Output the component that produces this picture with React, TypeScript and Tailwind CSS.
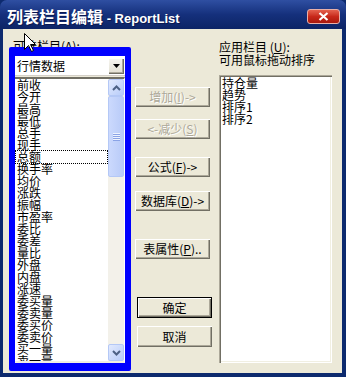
import React from "react";

const AVAILABLE = [
  "前收", "今开", "最高", "最低", "总手", "现手", "总额", "换手率", "均价", "涨跌", "振幅", "市盈率",
  "委比", "委差", "量比", "外盘", "内盘", "涨速", "委买量", "委卖量", "委买价", "委卖价", "买一量", "卖一量",
];
const APPLIED = ["持仓量", "趋势", "排序1", "排序2"];

const BEVEL = "shadow-[inset_1px_1px_0_#ffffff,inset_-1px_-1px_0_#716f64,inset_-2px_-2px_0_#aca899]";

function Btn({ children, disabled, isDefault, className = "" }: { children: React.ReactNode; disabled?: boolean; isDefault?: boolean; className?: string }) {
  return (
    <div
      className={`flex items-center justify-center w-[75px] bg-[#ece9d8] text-[12px] leading-[12px] ${BEVEL} ${
        isDefault ? "border border-black h-[21px]" : "h-[20px]"
      } ${disabled ? "text-[#aca899] [text-shadow:1px_1px_0_#ffffff]" : "text-black"} ${className}`}
    >
      {children}
    </div>
  );
}

function Chevron({ up }: { up?: boolean }) {
  return (
    <svg width="9" height="6" viewBox="0 0 9 6">
      <path d={up ? "M1 5 L4.5 1.5 L8 5" : "M1 1 L4.5 4.5 L8 1"} fill="none" stroke="#4d6185" strokeWidth="2" />
    </svg>
  );
}

function ScrollBtn({ up }: { up?: boolean }) {
  return (
    <div className="h-[17px] flex items-center justify-center rounded-[2px] border border-[#b4c8f6] bg-gradient-to-br from-[#e2eafe] to-[#b8ccf9]">
      <Chevron up={up} />
    </div>
  );
}

export default function App() {
  return (
    <div className="relative w-[346px] h-[377px] bg-[#0d2a6e] font-['Noto_Sans_CJK_SC','Noto_Sans',sans-serif] overflow-hidden">
      {/* title bar */}
      <div className="h-[29px] flex items-start justify-between rounded-t-[7px] bg-gradient-to-b from-[#2f4fa2] via-[#15307c] to-[#0c2466]">
        <div className="mt-[8px] ml-[7px] flex items-baseline text-white font-bold [text-shadow:1px_1px_0_#0a1850] whitespace-nowrap">
          <span className="text-[16px] leading-[16px]">列表栏目编辑</span>
          <span className="text-[13px] leading-[16px] font-['Liberation_Sans',sans-serif]">&nbsp;- ReportList</span>
        </div>
        <div className="mt-[9px] mr-[6px] w-[33px] h-[15px] rounded-[3px] border border-[#e8b0a8] bg-gradient-to-b from-[#e4604e] via-[#c8281a] to-[#a8180c] flex items-center justify-center">
          <svg width="11" height="9" viewBox="0 0 11 9">
            <path d="M1.5 1 L9.5 8 M9.5 1 L1.5 8" stroke="#ffffff" strokeWidth="2.2" />
          </svg>
        </div>
      </div>

      {/* client area */}
      <div className="ml-[3px] mr-[4px] h-[344px] bg-[#ece9d8] flex text-[12px] text-black">
        {/* left column */}
        <div className="ml-[12px] w-[110px] pt-[11px] flex flex-col">
          <div className="-ml-[2px] h-[12px] leading-[12px] whitespace-nowrap">
            可选栏目(<u>A</u>):
          </div>
          <div className="mt-[4px] h-[20px] bg-white flex items-center justify-between border-b border-[#d4d0c8]">
            <span className="ml-[2px] text-[12px] leading-[12px]">行情数据</span>
            <div className={`w-[16px] h-[16px] mr-[1px] flex items-center justify-center bg-gradient-to-b from-[#f7f6f1] to-[#e3e0d2] ${BEVEL}`}>
              <svg width="7" height="4" viewBox="0 0 7 4">
                <path d="M0 0 H7 L3.5 4 Z" fill="#000000" />
              </svg>
            </div>
          </div>
          <div className="mt-[1px] h-[286px] flex bg-white border-t-2 border-t-[#716f64] border-b-2 border-b-[#f1efe2] border-r border-r-white">
            <div className="flex-1 pl-[1px] overflow-hidden">
              {AVAILABLE.map((item, i) => (
                <div
                  key={item}
                  className={`h-[12px] leading-[12px] pl-[1px] whitespace-nowrap ${
                    i === 6 ? "border border-dotted border-black -my-[1px] h-[14px] -ml-[1px]" : ""
                  }`}
                >
                  {item}
                </div>
              ))}
            </div>
            <div className="w-[16px] flex flex-col bg-[#f3f1ea]">
              <ScrollBtn up />
              <div className="h-[81px] flex items-center justify-center rounded-[2px] border border-[#b4c8f6] bg-gradient-to-r from-[#cbd9fd] to-[#b9cbf8]">
                <div className="flex flex-col gap-[1px]">
                  <div className="w-[7px] h-[1px] bg-[#eef3fe] shadow-[0_1px_0_#8aa3e6]" />
                  <div className="w-[7px] h-[1px] bg-[#eef3fe] shadow-[0_1px_0_#8aa3e6]" />
                  <div className="w-[7px] h-[1px] bg-[#eef3fe] shadow-[0_1px_0_#8aa3e6]" />
                  <div className="w-[7px] h-[1px] bg-[#eef3fe] shadow-[0_1px_0_#8aa3e6]" />
                </div>
              </div>
              <div className="flex-1" />
              <ScrollBtn />
            </div>
          </div>
        </div>

        {/* middle buttons */}
        <div className="ml-[10px] w-[77px] pt-[58px] flex flex-col">
          <Btn disabled>增加(<u>I</u>)-&gt;</Btn>
          <Btn disabled className="mt-[12px]">&lt;-减少(<u>S</u>)</Btn>
          <Btn className="mt-[18px]">公式(<u>F</u>)-&gt;</Btn>
          <Btn className="mt-[14px]">数据库(<u>D</u>)-&gt;</Btn>
          <Btn className="mt-[28px]">表属性(<u>P</u>)..</Btn>
          <Btn isDefault className="mt-[38px] ml-[2px]">确定</Btn>
          <Btn className="mt-[8px] ml-[2px] h-[21px]">取消</Btn>
        </div>

        {/* right column */}
        <div className="ml-[7px] w-[113px] pt-[11px] flex flex-col">
          <div className="leading-[13px] whitespace-nowrap">应用栏目 (<u>U</u>):</div>
          <div className="leading-[13px] whitespace-nowrap">可用鼠标拖动排序</div>
          <div className="mt-[9px] h-[288px] bg-white p-[2px] pl-[3px] shadow-[inset_1px_1px_0_#aca899,inset_2px_2px_0_#716f64,inset_-1px_-1px_0_#ffffff,inset_-2px_-2px_0_#f1efe2]">
            {APPLIED.map((item) => (
              <div key={item} className="h-[12px] leading-[12px] whitespace-nowrap">
                {item}
              </div>
            ))}
          </div>
        </div>
      </div>

      {/* blue annotation frame */}
      <div className="absolute left-[9px] top-[47px] w-[122px] h-[324px] border-[#0000ff] border-x-[6px] border-t-[9px] border-b-[8px] rounded-[2px] pointer-events-none" />

      {/* mouse pointer */}
      <svg className="absolute left-[24px] top-[33px]" width="13" height="20" viewBox="0 0 13 20">
        <path d="M0.5 0.5 V16.5 L4.5 12.5 L7.5 18.5 L9.5 17.5 L6.5 11.5 H11.5 Z" fill="#ffffff" stroke="#000000" strokeWidth="1" />
      </svg>
    </div>
  );
}
